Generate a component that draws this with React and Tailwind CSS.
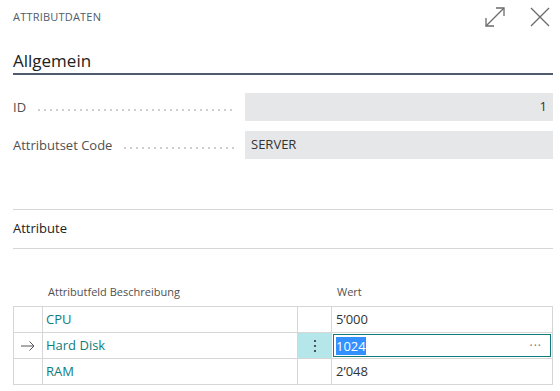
import React from "react";

const font = { fontFamily: '"Open Sans", "Noto Sans", sans-serif' };

const Leader = () => (
  <div className="flex-1 ml-[10px] mr-[10px] h-[2px] mt-[3px] bg-[radial-gradient(circle,#cdcdcd_0.7px,transparent_1px)] bg-[length:6px_2px]" />
);

const FieldRow = ({ label, value, right }) => (
  <div className="flex items-center h-[28px]">
    <div className="w-[232px] flex items-center text-[13px] text-[#505050] pt-[2px]">
      <span>{label}</span>
      <Leader />
    </div>
    <div
      className={`flex-1 h-full bg-[#e6e7e8] flex items-center px-[6px] text-[13px] text-[#333] ${right ? "justify-end" : ""}`}
    >
      {value}
    </div>
  </div>
);

const rows = [
  { name: "CPU", value: "5\u2019000" },
  { name: "Hard Disk", value: "1024", active: true },
  { name: "RAM", value: "2\u2019048" },
];

export default function App() {
  return (
    <div className="w-[560px] h-[391px] bg-white overflow-hidden pl-[13px] pr-[7px]" style={font}>
      <div className="flex items-center justify-between h-[34px]">
        <span className="text-[11px] tracking-[0.2px] text-[#505c6d]">ATTRIBUTDATEN</span>
        <div className="flex items-center gap-[24px] pr-[3px]">
          <svg width="22" height="22" viewBox="0 0 22 22" fill="none" stroke="#6b6b6b" strokeWidth="1.3">
            <path d="M2 20 L20 2" />
            <path d="M12 2 H20 V10" />
            <path d="M2 12 V20 H10" />
          </svg>
          <svg width="20" height="20" viewBox="0 0 20 20" fill="none" stroke="#6b6b6b" strokeWidth="1.3">
            <path d="M1 1 L19 19 M19 1 L1 19" />
          </svg>
        </div>
      </div>

      <div className="pt-[14px] h-[41px] border-b-[2px] border-[#505c6d] text-[17px] text-[#212121]">
        Allgemein
      </div>

      <div className="pt-[18px] flex flex-col gap-[10px]">
        <FieldRow label="ID" value="1" right />
        <FieldRow label="Attributset Code" value="SERVER" />
      </div>

      <div className="mt-[50px] border-t border-[#d6d6d6] h-[40px] border-b flex items-center text-[13px] font-medium text-[#212121]">
        Attribute
      </div>

      <div className="flex h-[57px] items-end pb-[6px] text-[11px] text-[#505050]">
        <span className="w-[290px] pl-[35px]">Attributfeld Beschreibung</span>
        <span className="pl-[34px]">Wert</span>
      </div>

      <div className="border-t border-l border-[#d6d6d6] text-[13px]">
        {rows.map((r) => (
          <div key={r.name} className="flex h-[26px] border-b border-[#d6d6d6]">
            <div className="w-[29px] border-r border-[#d6d6d6] flex items-center justify-center text-[#555]">
              {r.active && (
                <svg width="14" height="10" viewBox="0 0 14 10" fill="none" stroke="#555" strokeWidth="1">
                  <path d="M0 5 H13 M8.5 0.5 L13 5 L8.5 9.5" />
                </svg>
              )}
            </div>
            <div className="w-[255px] border-r border-[#d6d6d6] flex items-center pl-[3px] text-[#0f7b7d]">
              {r.name}
            </div>
            <div
              className={`w-[34px] border-r border-[#d6d6d6] flex items-center justify-center ${r.active ? "bg-[#b4e6ea]" : ""}`}
            >
              {r.active && (
                <svg width="4" height="14" viewBox="0 0 4 14" fill="#333">
                  <circle cx="2" cy="2" r="1.1" />
                  <circle cx="2" cy="7" r="1.1" />
                  <circle cx="2" cy="12" r="1.1" />
                </svg>
              )}
            </div>
            {r.active ? (
              <div className="flex-1 border-r border-[#d6d6d6] p-[1px]">
                <div className="h-full border border-[#0f7b7d] flex items-center justify-between pl-[2px] pr-[8px]">
                  <span className="bg-[#3390ff] text-white leading-[18px]">1024</span>
                  <span className="text-[#777] text-[12px] tracking-[1px]">···</span>
                </div>
              </div>
            ) : (
              <div className="flex-1 border-r border-[#d6d6d6] flex items-center pl-[4px] text-[#333]">
                {r.value}
              </div>
            )}
          </div>
        ))}
      </div>
    </div>
  );
}
